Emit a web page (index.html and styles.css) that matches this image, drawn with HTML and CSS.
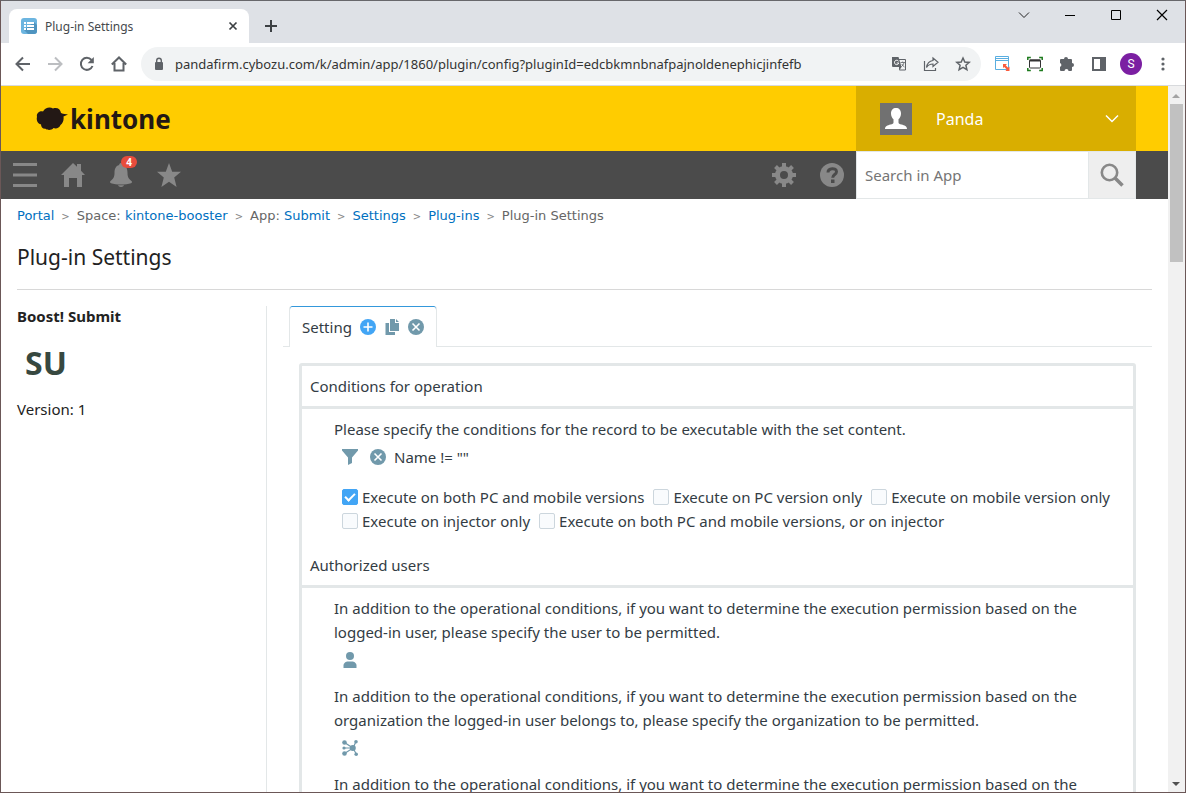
FILE: index.html
```html
<!DOCTYPE html>
<html lang="en">
<head>
  <meta charset="UTF-8">
  <title>Plug-in Settings</title>
  <link rel="stylesheet" href="styles.css">
</head>
<body>
  <div class="window">
    <div class="tab-strip">
      <div class="browser-tab">
        <svg class="favicon" width="16" height="16" viewBox="0 0 16 16">
          <rect width="16" height="16" rx="3" fill="#6cb5e0"/>
          <path d="M13 4l3 3v6a3 3 0 0 1-3 3H7l-4-4z" fill="#4f94c0"/>
          <path d="M3 4h2v2H3zM6 4h7v2H6zM3 7h2v2H3zM6 7h7v2H6zM3 10h2v2H3zM6 10h7v2H6z" fill="#fff"/>
        </svg>
        <span class="browser-tab-title">Plug-in Settings</span>
        <button class="icon-btn" aria-label="Close tab">
          <svg width="10" height="10" viewBox="0 0 10 10" fill="none" stroke="#3c4043" stroke-width="1.7"><path d="M1.500 1.500l7 7M8.500 1.500l-7 7"/></svg>
        </button>
      </div>
      <button class="icon-btn new-tab" aria-label="New tab">
        <svg width="14" height="14" viewBox="0 0 14 14" fill="none" stroke="#3c4043" stroke-width="2"><path d="M7 1v12M1 7h12"/></svg>
      </button>
      <div class="window-controls">
        <button class="icon-btn" aria-label="Search tabs"><svg width="12" height="12" viewBox="0 0 12 12" fill="none" stroke="#222"><path d="M1 3.500l5 5 5-5"/></svg></button>
        <button class="icon-btn" aria-label="Minimize"><svg width="12" height="12" viewBox="0 0 12 12" fill="none" stroke="#000"><path d="M1 6.500h10"/></svg></button>
        <button class="icon-btn" aria-label="Maximize"><svg width="12" height="12" viewBox="0 0 12 12" fill="none" stroke="#000"><path d="M1.500 1.500h9v9h-9z"/></svg></button>
        <button class="icon-btn" aria-label="Close"><svg width="12" height="12" viewBox="0 0 12 12" fill="none" stroke="#000" stroke-width="1.200"><path d="M1 1l10 10M11 1L1 11"/></svg></button>
      </div>
    </div>

    <div class="toolbar">
      <div class="nav-buttons">
        <button class="icon-btn" aria-label="Back"><svg width="16" height="16" viewBox="0 0 16 16" fill="none" stroke="#5f6368" stroke-width="2"><path d="M15 8H2M8 1.500L1.500 8 8 14.500"/></svg></button>
        <button class="icon-btn" aria-label="Forward"><svg width="16" height="16" viewBox="0 0 16 16" fill="none" stroke="#bcbec1" stroke-width="2"><path d="M1 8h13M8 1.500L14.500 8 8 14.500"/></svg></button>
        <button class="icon-btn" aria-label="Reload"><svg width="16" height="16" viewBox="0 0 16 16"><path d="M13.500 10A6 6 0 1 1 12.500 4" fill="none" stroke="#5f6368" stroke-width="2"/><path d="M14.800 1v6.200H8.600z" fill="#5f6368"/></svg></button>
        <button class="icon-btn" aria-label="Home"><svg width="16" height="16" viewBox="0 0 16 16" fill="none" stroke="#5f6368" stroke-width="2"><path d="M0.800 8.500L8 1.500l7.200 7M3.500 7v7.500h9V7"/></svg></button>
      </div>
      <div class="address-bar">
        <svg width="10" height="14" viewBox="0 0 10 14"><rect x="1" y="5" width="8" height="8" rx="1" fill="#5f6368"/><path d="M2.700 5.500V3.500a2.300 2.300 0 0 1 4.600 0v2" fill="none" stroke="#5f6368" stroke-width="1.400"/></svg>
        <input class="address" type="text" aria-label="Address" value="pandafirm.cybozu.com/k/admin/app/1860/plugin/config?pluginId=edcbkmnbnafpajnoldenephicjinfefb">
        <button class="icon-btn" aria-label="Translate"><svg width="16" height="16" viewBox="0 0 16 16"><path d="M6 3.500h8.500v10.500H9" fill="none" stroke="#5f6368"/><path d="M1 1h6.500l3 10H2a1 1 0 0 1-1-1z" fill="#5f6368"/><path d="M7.500 5.200A2.200 2.200 0 1 0 7.800 7H5.700" fill="none" stroke="#fff"/><path d="M8 15l2.500-4H8z" fill="#5f6368"/><path d="M9.500 6.500h4.500M11.700 5.500v1M13 6.500c-.4 2-1.500 3.300-2.800 4.300M10.800 8c.5 1.200 1.500 2.200 2.700 3" fill="none" stroke="#5f6368" stroke-width=".8"/></svg></button>
        <button class="icon-btn" aria-label="Share"><svg width="16" height="16" viewBox="0 0 16 16" fill="none" stroke="#5f6368" stroke-width="1.200"><path d="M1.500 5v9.500h11V12M10 2l5 4.200-5 4.200V8C7 8 5 9 3.500 11.500 4 8 6 5 10 4.500z"/></svg></button>
        <button class="icon-btn" aria-label="Bookmark"><svg width="16" height="16" viewBox="0 0 16 16" fill="none" stroke="#5f6368" stroke-width="1.500"><path d="M8 2l1.800 4 4.400.4-3.300 2.900 1 4.300L8 11.300l-3.900 2.300 1-4.300-3.300-2.900L6.200 6z"/></svg></button>
      </div>
      <div class="extensions">
        <button class="icon-btn" aria-label="Window resizer"><svg width="16" height="16" viewBox="0 0 16 16"><path d="M.5.500h13v13H.5zM.5 4.500h13M1 2.500h12" fill="none" stroke="#5aaee0"/><path d="M8 8h4l-1.300 1.300 2.400 2.400L14.500 10.500V15H10.500l1.200-1.500-2.400-2.400L8 12z" fill="#fb5b3c"/></svg></button>
        <button class="icon-btn" aria-label="Screenshot"><svg width="16" height="16" viewBox="0 0 16 16" fill="none"><path d="M.8 4V1.500h3M12.200 1.500h3V4M.8 12v2.500h3M12.200 14.500h3V12" stroke="#1c7a1c" stroke-width="1.500"/><rect x="2.500" y="4" width="11" height="8" rx="1" stroke="#333"/><path d="M2.500 4.500h11" stroke="#333" stroke-width="2"/></svg></button>
        <button class="icon-btn" aria-label="Extensions"><svg width="16" height="16" viewBox="0 0 16 16" fill="#5f6368"><path d="M5 3a2 2 0 0 1 4 0h3a1 1 0 0 1 1 1v3a2 2 0 0 1 0 4v3a1 1 0 0 1-1 1H9.500a2 2 0 0 0-4 0H2a1 1 0 0 1-1-1v-3.200a2 2 0 0 0 0-3.800V4a1 1 0 0 1 1-1z"/></svg></button>
        <button class="icon-btn" aria-label="Side panel"><svg width="16" height="16" viewBox="0 0 16 16"><rect x="2" y="2" width="12" height="12" fill="none" stroke="#5f6368" stroke-width="2"/><path d="M9 2h5v12H9z" fill="#5f6368"/></svg></button>
        <button class="profile">S</button>
        <button class="icon-btn" aria-label="Menu"><svg width="16" height="16" viewBox="0 0 16 16" fill="#5f6368"><circle cx="8" cy="3" r="1.600"/><circle cx="8" cy="8" r="1.600"/><circle cx="8" cy="13" r="1.600"/></svg></button>
      </div>
    </div>

    <div class="viewport">
      <div class="page">
        <header class="header">
          <a class="logo" href="#">
            <svg width="32" height="24" viewBox="0 0 32 24" fill="#231815"><path d="M1 10C0 6 4 3.500 7 4.500 9 .5 14-.5 17 1.500c4-1.500 7.500.5 8 4.500l2 .8L32 7.500l-4.500 2C28 13 27 16 24.500 18c-1 3-4.500 4-7 3-2 2.500-6 2.500-8 .8-3 .2-4.500-2-4.500-4.500C2 17 0 13 1 10z"/></svg>
            <span class="logo-text">kintone</span>
          </a>
          <button class="user">
            <svg width="32" height="32" viewBox="0 0 32 32"><rect width="32" height="32" fill="#717171"/><path d="M16 5c3 0 5 2 5 5.500 0 2.500-1 4.500-2.500 5.700v3.300c0 1 1 1.500 3 2.100 3 .9 5.500 1.800 5.500 4.400H5c0-2.600 2.500-3.500 5.500-4.400 2-.6 3-1.100 3-2.100v-3.300C12 15 11 13 11 10.500 11 7 13 5 16 5z" fill="#fff"/></svg>
            <span class="user-name">Panda</span>
            <svg width="14" height="10" viewBox="0 0 14 10" fill="none" stroke="#fff" stroke-width="1.500"><path d="M1 1.500l6 6 6-6"/></svg>
          </button>
        </header>

        <nav class="menu-bar">
          <button class="menu-btn" aria-label="Menu"><svg width="24" height="24" viewBox="0 0 24 24" fill="#888"><path d="M0 0h24v3H0zM0 10.500h24v3H0zM0 21h24v3H0z"/></svg></button>
          <button class="menu-btn" aria-label="Home"><svg width="24" height="24" viewBox="0 0 24 24" fill="#888"><path d="M12 0l4 3.800V1h4v6.700l4 4.300h-3v12h-5v-9H8v9H3V12H0z"/></svg></button>
          <button class="menu-btn" aria-label="Notifications">
            <svg width="24" height="24" viewBox="0 0 24 24" fill="#888"><path d="M12 0c1.200 0 1.800 1 1.800 2 3.700 1 4.700 4 4.700 8 0 4.500 1.500 6 4 8 1 1 .5 1.800-.5 2.200-5 1.800-15 1.800-20 0-1-.4-1.500-1.200-.5-2.200 2.500-2 4-3.500 4-8 0-4 1-7 4.700-8 0-1 .6-2 1.800-2zM9 22.300h6c-.5 1.200-1.500 1.700-3 1.700s-2.500-.5-3-1.700z"/></svg>
            <span class="badge">4</span>
          </button>
          <button class="menu-btn" aria-label="Bookmarks"><svg width="24" height="24" viewBox="0 0 24 24" fill="#888"><path d="M12 0l3.200 8.800H24l-6.800 5.800L19.600 24 12 18.700 4.400 24l2.400-9.400L0 8.800h8.800z"/></svg></button>
          <div class="menu-right">
            <button class="menu-btn" aria-label="Settings"><svg width="24" height="24" viewBox="0 0 24 24"><circle cx="12" cy="12" r="6.500" fill="none" stroke="#888" stroke-width="5"/><path d="M12 0v5M12 19v5M0 12h5M19 12h5M3.500 3.500L7 7M17 17l3.500 3.500M20.500 3.500L17 7M7 17l-3.500 3.500" stroke="#888" stroke-width="4"/></svg></button>
            <button class="menu-btn" aria-label="Help"><svg width="24" height="24" viewBox="0 0 24 24"><circle cx="12" cy="12" r="12" fill="#888"/><path d="M8 9.500c0-5 8.500-5 8.500-.8 0 2.800-3.800 2.800-3.800 6" fill="none" stroke="#4b4b4b" stroke-width="3"/><rect x="11" y="16.500" width="3.500" height="3.500" fill="#4b4b4b"/></svg></button>
            <form class="search">
              <input class="search-input" type="text" placeholder="Search in App" aria-label="Search in App">
              <button class="search-btn" type="button" aria-label="Search"><svg width="24" height="24" viewBox="0 0 24 24" fill="none" stroke="#888"><circle cx="9.500" cy="9.500" r="7.700" stroke-width="2.600"/><path d="M15 15l7.500 7.500" stroke-width="3.600"/></svg></button>
            </form>
          </div>
        </nav>

        <main class="content">
          <div class="breadcrumb">
            <a href="#">Portal</a>
            <span class="sep">&gt;</span>
            <span>Space: <a href="#">kintone-booster</a></span>
            <span class="sep">&gt;</span>
            <span>App: <a href="#">Submit</a></span>
            <span class="sep">&gt;</span>
            <a href="#">Settings</a>
            <span class="sep">&gt;</span>
            <a href="#">Plug-ins</a>
            <span class="sep">&gt;</span>
            <span>Plug-in Settings</span>
          </div>
          <h1 class="title">Plug-in Settings</h1>

          <div class="columns">
            <aside class="plugin">
              <h2 class="plugin-name">Boost! Submit</h2>
              <div class="plugin-icon">SU</div>
              <p class="plugin-version">Version: 1</p>
            </aside>

            <section class="config">
              <div class="tabs">
                <div class="tab">
                  <span>Setting</span>
                  <button class="icon-btn" aria-label="Add"><svg width="16" height="16" viewBox="0 0 16 16"><circle cx="8" cy="8" r="8" fill="#42a5f5"/><path d="M8 3.500v9M3.500 8h9" stroke="#fff" stroke-width="1.600"/></svg></button>
                  <button class="icon-btn" aria-label="Copy"><svg width="16" height="16" viewBox="0 0 16 16" fill="#7199ab"><path d="M6 0h5v4h4v8H6zM12 0l3 3h-3zM1.500 4H5v9h6v3H1.500z"/></svg></button>
                  <button class="icon-btn" aria-label="Delete"><svg width="16" height="16" viewBox="0 0 16 16"><circle cx="8" cy="8" r="8" fill="#7199ab"/><path d="M4.500 4.500l7 7M11.500 4.500l-7 7" stroke="#fff" stroke-width="1.600"/></svg></button>
                </div>
              </div>

              <div class="panel">
                <h3 class="panel-head">Conditions for operation</h3>
                <div class="panel-body">
                  <p>Please specify the conditions for the record to be executable with the set content.</p>
                  <div class="field">
                    <button class="icon-btn" aria-label="Edit conditions"><svg width="16" height="16" viewBox="0 0 16 16" fill="#7199ab"><path d="M0 0h16v1.500L10 8.500V14l-4 2V8.500L0 1.500z"/></svg></button>
                    <button class="icon-btn" aria-label="Clear conditions"><svg width="16" height="16" viewBox="0 0 16 16"><circle cx="8" cy="8" r="8" fill="#7199ab"/><path d="M4.500 4.500l7 7M11.500 4.500l-7 7" stroke="#fff" stroke-width="1.600"/></svg></button>
                    <span>Name != ""</span>
                  </div>
                  <div class="options">
                    <label><input type="radio" name="device" checked>Execute on both PC and mobile versions</label>
                    <label><input type="radio" name="device">Execute on PC version only</label>
                    <label><input type="radio" name="device">Execute on mobile version only</label>
                    <label><input type="radio" name="device">Execute on injector only</label>
                    <label><input type="radio" name="device">Execute on both PC and mobile versions, or on injector</label>
                  </div>
                </div>

                <h3 class="panel-head">Authorized users</h3>
                <div class="panel-body">
                  <p>In addition to the operational conditions, if you want to determine the execution permission based on the logged-in user, please specify the user to be permitted.</p>
                  <div class="field">
                    <button class="icon-btn" aria-label="Select users"><svg width="16" height="16" viewBox="0 0 16 16" fill="#7199ab"><circle cx="8" cy="4" r="4"/><path d="M1.500 16v-2.500C1.500 11 4 9.500 6 9.500h4c2 0 4.500 1.500 4.500 4V16z"/></svg></button>
                  </div>
                  <p>In addition to the operational conditions, if you want to determine the execution permission based on the organization the logged-in user belongs to, please specify the organization to be permitted.</p>
                  <div class="field">
                    <button class="icon-btn" aria-label="Select organizations"><svg width="16" height="16" viewBox="0 0 16 16" fill="#7199ab"><path d="M2.500 2.500L11 8l3-6.500M2 8h9M2.500 13.500L11 8l3.500 6.500" fill="none" stroke="#7199ab" stroke-width="1.200"/><circle cx="10.800" cy="8" r="3"/><circle cx="2.500" cy="2.500" r="2.300"/><circle cx="2" cy="8" r="1.600"/><circle cx="2.500" cy="13.500" r="2.300"/><circle cx="14" cy="1.800" r="1.800"/><circle cx="14.200" cy="14.200" r="1.800"/></svg></button>
                  </div>
                  <p>In addition to the operational conditions, if you want to determine the execution permission based on the</p>
                </div>
              </div>
            </section>
          </div>
        </main>
      </div>

      <div class="scrollbar">
        <svg width="16" height="18" viewBox="0 0 16 18" fill="#a3a3a3"><path d="M4 12l4-4 4 4z"/></svg>
        <div class="scroll-thumb"></div>
        <svg width="16" height="18" viewBox="0 0 16 18" fill="#505050"><path d="M4 8h8l-4 4z"/></svg>
      </div>
    </div>
  </div>
</body>
</html>
```
FILE: styles.css
```css
* {
  box-sizing: border-box;
}
body {
  margin: 0;
  font-family: "Noto Sans", sans-serif;
  color: #333;
}
button {
  border: 0;
  padding: 0;
  background: none;
  font: inherit;
  cursor: pointer;
}
svg {
  display: block;
  flex: none;
}
h1, h2, h3, p {
  margin: 0;
  font-weight: normal;
}
a {
  color: #0070c0;
  text-decoration: none;
}
.window {
  display: flex;
  flex-direction: column;
  height: 100vh;
  border: 1px solid #6b5757;
  border-top-color: #67676b;
  overflow: hidden;
}
.icon-btn {
  display: flex;
  align-items: center;
  justify-content: center;
}

/* browser chrome */
.tab-strip {
  display: flex;
  flex: none;
  height: 42px;
  padding: 8px 8px 0;
  background: #dee1e6;
}
.browser-tab {
  display: flex;
  align-items: center;
  gap: 8px;
  width: 240px;
  padding: 0 11px 0 12px;
  border-radius: 8px 8px 0 0;
  background: #fff;
  font-size: 12px;
  color: #45494d;
}
.browser-tab-title {
  flex: 1;
}
.new-tab {
  width: 28px;
  margin: 0 8px;
}
.window-controls {
  display: flex;
  align-items: flex-start;
  gap: 34px;
  margin-left: auto;
  padding-right: 9px;
}
.toolbar {
  display: flex;
  align-items: center;
  flex: none;
  gap: 14px;
  height: 43px;
  padding: 0 14px;
  border-bottom: 1px solid #d8dadd;
  background: #fff;
}
.nav-buttons {
  display: flex;
  gap: 16px;
}
.address-bar {
  display: flex;
  align-items: center;
  flex: 1;
  gap: 16px;
  height: 34px;
  padding: 0 10px 0 13px;
  border-radius: 17px;
  background: #f1f3f4;
}
.address {
  flex: 1;
  min-width: 0;
  margin-left: -5px;
  padding: 0;
  border: 0;
  background: none;
  font: 13px "Noto Sans", sans-serif;
  color: #333;
}
.extensions {
  display: flex;
  align-items: center;
  gap: 16px;
}
.profile {
  width: 22px;
  height: 22px;
  margin: 0 -3px;
  border-radius: 50%;
  background: #7b1fa2;
  color: #fff;
  font: 12px Roboto, sans-serif;
}

/* page and scrollbar */
.viewport {
  display: flex;
  flex: 1;
  min-height: 0;
}
.page {
  flex: 1;
  min-width: 0;
  overflow: hidden;
  background: #fff;
}
.scrollbar {
  display: flex;
  flex-direction: column;
  width: 17px;
  background: #f1f1f1;
}
.scroll-thumb {
  flex: none;
  width: 13px;
  height: 158px;
  margin: 0 2px auto;
  background: #c1c1c1;
}

/* kintone header */
.header {
  display: flex;
  justify-content: space-between;
  height: 65px;
  padding: 0 32px 0 35px;
  background: #ffcc00;
}
.logo {
  display: flex;
  align-items: center;
  gap: 2px;
  color: #231815;
}
.logo-text {
  font: bold 26px/32px "Noto Sans", sans-serif;
}
.user {
  display: flex;
  align-items: center;
  gap: 24px;
  width: 280px;
  padding: 0 17px 0 24px;
  background: #d9ae00;
  color: #fff;
  font-size: 16px;
  text-align: left;
}
.user-name {
  flex: 1;
}
.menu-bar {
  display: flex;
  height: 48px;
  padding-right: 32px;
  background: #4b4b4b;
}
.menu-btn {
  position: relative;
  display: flex;
  align-items: center;
  justify-content: center;
  width: 48px;
  height: 48px;
}
.badge {
  position: absolute;
  top: 5px;
  left: 24px;
  width: 16px;
  height: 12px;
  border-radius: 6px;
  background: #e74c3c;
  color: #fff;
  font: bold 10px/12px "Noto Sans", sans-serif;
}
.menu-right {
  display: flex;
  margin-left: auto;
}
.search {
  display: flex;
  width: 280px;
  border: 1px solid #e3e7e8;
  background: #fff;
}
.search-input {
  flex: 1;
  min-width: 0;
  padding: 0 8px;
  border: 0;
  font: 15px "Noto Sans", sans-serif;
}
.search-input::placeholder {
  color: #757575;
}
.search-btn {
  display: flex;
  align-items: center;
  justify-content: center;
  width: 47px;
  border-left: 1px solid #e3e7e8;
  background: #eee;
}

/* content */
.content {
  padding: 0 16px;
}
.breadcrumb {
  display: flex;
  gap: 7px;
  padding-top: 8px;
  font-family: "DejaVu Sans", sans-serif;
  font-size: 13px;
  line-height: 18px;
  color: #666;
}
.sep {
  padding-top: 1px;
  font-size: 10px;
  color: #888;
}
.title {
  padding: 15px 0 16px;
  border-bottom: 1px solid #d8d8d8;
  font-size: 21px;
  line-height: 32px;
  color: #222;
}
.columns {
  display: flex;
  gap: 16px;
  padding-top: 16px;
}
.plugin {
  width: 250px;
  border-right: 1px solid #e3e7e8;
  font-size: 15px;
  line-height: 20px;
  color: #222;
}
.plugin-name {
  font-size: 15px;
  font-weight: bold;
}
.plugin-icon {
  padding: 20px 8px;
  font-size: 32px;
  font-weight: bold;
  line-height: 33px;
  color: #374840;
}
.config {
  flex: 1;
  min-width: 0;
  font-size: 15px;
  line-height: 24px;
  color: #333c44;
}
.tabs {
  display: flex;
  padding-left: 6px;
  border-bottom: 1px solid #e3e7e8;
}
.tab {
  display: flex;
  align-items: center;
  gap: 8px;
  height: 41px;
  margin-bottom: -1px;
  padding: 0 12px;
  border: solid #e3e7e8;
  border-width: 0 1px;
  border-radius: 3px 3px 0 0;
  background: #fff;
  box-shadow: inset 0 1px #3498db;
}
.panel {
  margin: 16px;
  border: 3px solid #e3e7e8;
  border-radius: 3px;
}
.panel-head {
  padding: 8px;
  border-bottom: 3px solid #e3e7e8;
  font-size: 15px;
}
.panel-body {
  padding: 8px 16px 8px 32px;
}
.field {
  display: flex;
  align-items: center;
  gap: 12px;
  height: 32px;
  margin-bottom: 8px;
  padding-left: 8px;
}
.field span {
  margin-left: -4px;
}
.options {
  display: flex;
  flex-wrap: wrap;
  column-gap: 9px;
  padding: 4px 0 4px 8px;
}
.options label {
  display: flex;
  align-items: center;
  gap: 4px;
}
.options input {
  appearance: none;
  width: 16px;
  height: 16px;
  margin: 0;
  border: 1px solid #ccd6dd;
  border-radius: 2px;
  background: #f9fbfd;
}
.options input:checked {
  display: flex;
  justify-content: center;
  border-color: #42a5f5;
  background: #42a5f5;
}
.options input:checked::before {
  content: "";
  width: 4px;
  height: 8px;
  margin-top: 1px;
  border: solid #fff;
  border-width: 0 2px 2px 0;
  transform: rotate(45deg);
}
```
